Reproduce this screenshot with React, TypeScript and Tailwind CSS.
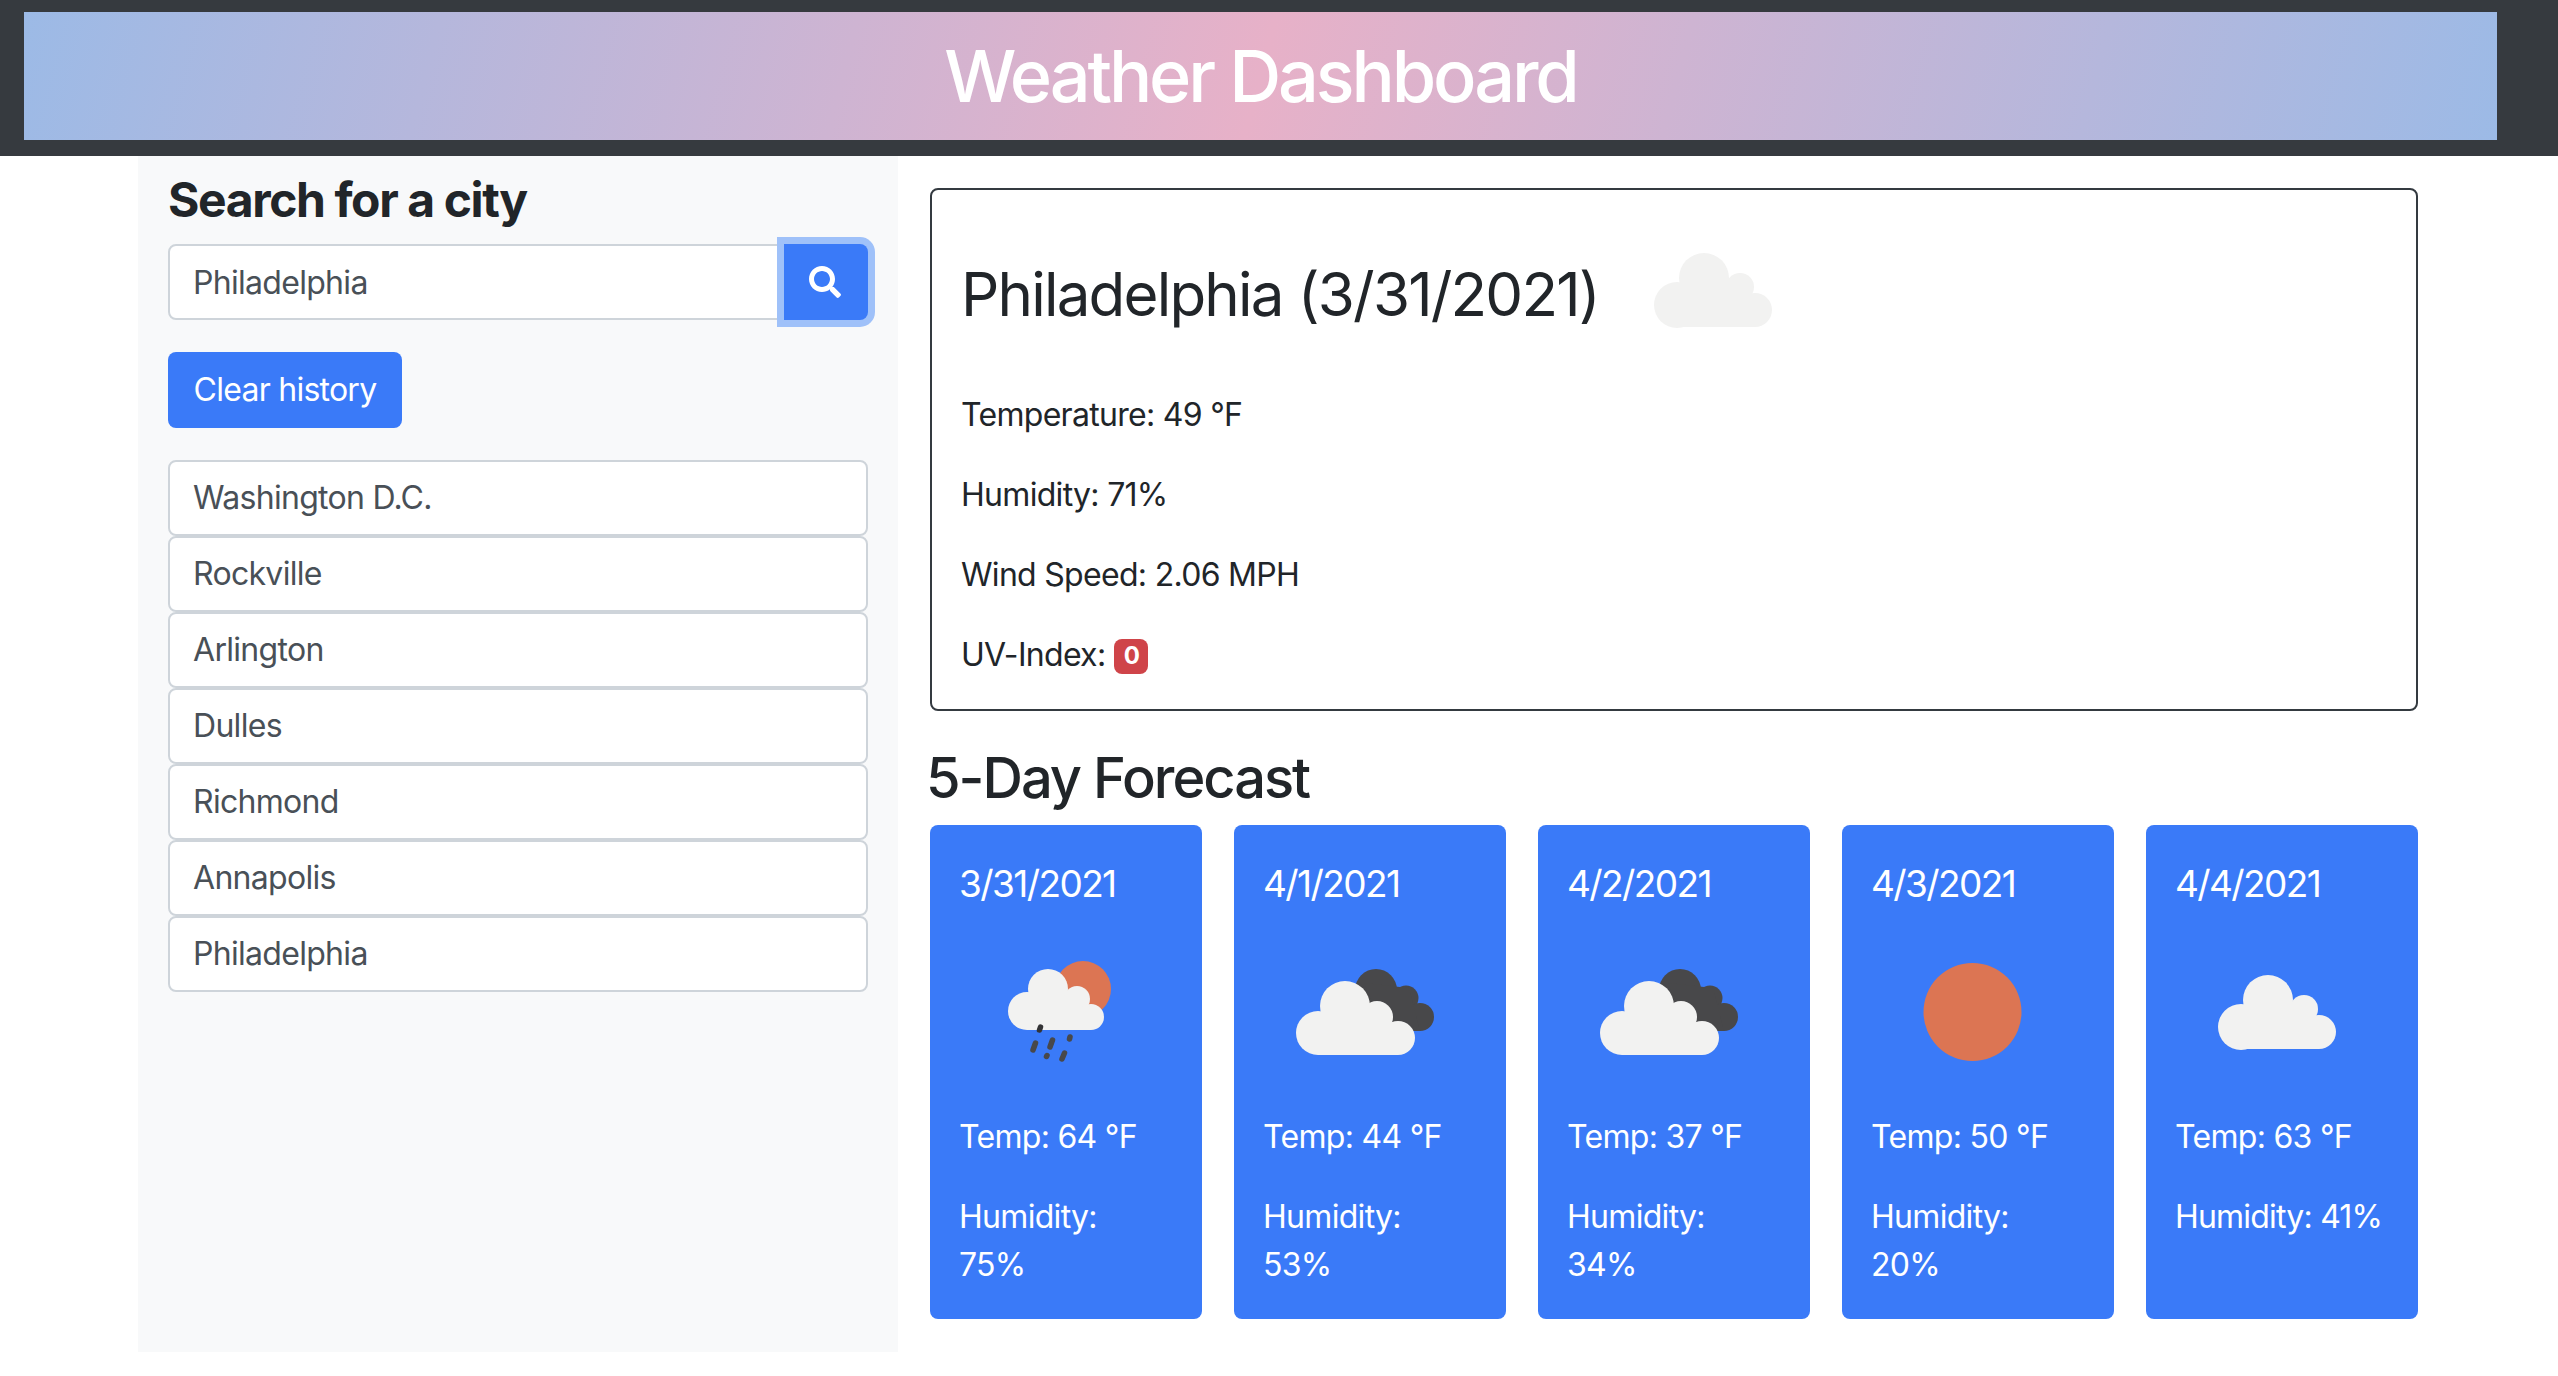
import { FaSearch } from "react-icons/fa"

const cities = ["Washington D.C.", "Rockville", "Arlington", "Dulles", "Richmond", "Annapolis", "Philadelphia"]

const forecast = [
    { date: "3/31/2021", temp: "Temp: 64 °F", humidity: "Humidity: 75%", icon: "rain" },
    { date: "4/1/2021", temp: "Temp: 44 °F", humidity: "Humidity: 53%", icon: "broken" },
    { date: "4/2/2021", temp: "Temp: 37 °F", humidity: "Humidity: 34%", icon: "broken" },
    { date: "4/3/2021", temp: "Temp: 50 °F", humidity: "Humidity: 20%", icon: "sun" },
    { date: "4/4/2021", temp: "Temp: 63 °F", humidity: "Humidity: 41%", icon: "cloud", oneLine: true },
]

function PlainCloud() {
    return (
        <g fill="#f2f2f1">
            <circle cx="65" cy="114" r="23" />
            <circle cx="92" cy="87" r="25" />
            <circle cx="128" cy="96" r="14" />
            <circle cx="143" cy="119" r="17" />
            <rect x="65" y="96" width="63" height="40" />
            <rect x="128" y="108" width="15" height="28" />
        </g>
    )
}

function WeatherIcon({ kind }: { kind: string }) {
    return (
        <svg className="w-[200px] h-[200px] shrink-0 ml-px" viewBox="0 0 200 200">
            {kind === "sun" && <circle cx="100.5" cy="99" r="49" fill="#dc7553" />}
            {kind === "cloud" && <PlainCloud />}
            {kind === "broken" && (
                <g>
                    <g fill="#48484a">
                        <circle cx="112" cy="77" r="21" />
                        <circle cx="142" cy="85" r="12.5" />
                        <circle cx="156" cy="104" r="14" />
                        <path d="M100 70 L145 75 L156 118 L120 118 Z" />
                    </g>
                    <g fill="#f2f2f1">
                        <circle cx="54" cy="120" r="22" />
                        <circle cx="81" cy="93" r="25" />
                        <circle cx="113" cy="104" r="16" />
                        <circle cx="134" cy="125" r="17" />
                        <rect x="54" y="100" width="59" height="42" />
                        <rect x="113" y="112" width="21" height="30" />
                    </g>
                </g>
            )}
            {kind === "rain" && (
                <g>
                    <circle cx="123" cy="76" r="28" fill="#dc7553" />
                    <g fill="#f2f2f1">
                        <circle cx="67" cy="98" r="19" />
                        <circle cx="88" cy="76" r="20" />
                        <circle cx="117" cy="86" r="13" />
                        <circle cx="131" cy="104" r="13" />
                        <rect x="67" y="85" width="50" height="32" />
                        <rect x="117" y="95" width="14" height="22" />
                    </g>
                    <g stroke="#48484a" strokeWidth="5.5" strokeLinecap="round">
                        <path d="M80.5 114 L79.5 117" stroke="#333335" />
                        <path d="M75.5 130 L73 137" />
                        <path d="M92.5 127 L90 134" />
                        <path d="M110 124 L109.5 126" />
                        <path d="M87 142.5 L86.5 143.5" />
                        <path d="M104.5 140 L102 146" />
                    </g>
                </g>
            )}
        </svg>
    )
}

function WeatherIconMain() {
    return (
        <svg className="w-[200px] h-[200px] shrink-0" viewBox="0 0 200 200">
            <PlainCloud />
        </svg>
    )
}

export default function App() {
    return (
        <div className="min-h-[1376px] bg-white text-[32px] leading-[48px] text-[#212529] font-['Inter',sans-serif]">
            {/* Header */}
            <header className="bg-[#363a3f] pt-3 pb-4 pl-6 pr-[61px]">
                <div className="h-32 flex items-center justify-center bg-[linear-gradient(105deg,#9cbae6,#e7b1c8_50%,#9cbae6)]">
                    <h1 className="text-[72px] leading-none font-medium text-white tracking-[-3.1px]">Weather Dashboard</h1>
                </div>
            </header>

            <div className="flex pl-[138px]">
                {/* Sidebar */}
                <aside className="w-[760px] shrink-0 bg-[#f8f9fa] pt-2.5 px-[30px] h-[1196px]">
                    <h3 className="text-[48px] leading-[68px] font-bold tracking-[-1.4px] mb-[10px]">Search for a city</h3>
                    <div className="flex">
                        <input
                            readOnly
                            value="Philadelphia"
                            className="w-[616px] h-[76px] bg-white border-2 border-[#ced4da] rounded-l-lg px-[23px] text-[32px] text-[#495057] tracking-[-0.7px] outline-none"
                        />
                        <button className="w-[84px] h-[76px] flex items-center justify-center bg-[#3a7af8] text-white rounded-r-lg shadow-[0_0_0_7px_#9fc1f9]">
                            <FaSearch size={32} className="-ml-0.5" />
                        </button>
                    </div>
                    <button className="mt-8 h-[76px] w-[234px] bg-[#3a7af8] text-white rounded-lg text-[32px] tracking-[-0.75px]">Clear history</button>
                    <ul className="mt-8">
                        {cities.map((city) => (
                            <li key={city} className="h-[76px] flex items-center bg-white border-2 border-[#ced4da] rounded-lg px-[23px] text-[#495057] tracking-[-0.7px]">
                                {city}
                            </li>
                        ))}
                    </ul>
                </aside>

                {/* Main */}
                <main className="w-[1520px] pl-8 pt-8">
                    <section className="h-[523px] border-2 border-[#343a40] rounded-lg pl-[29px]">
                        <div className="flex items-center h-[200px] mt-px">
                            <h2 className="w-[651px] shrink-0 mt-1.5 whitespace-nowrap text-[60px] leading-[72px] font-normal tracking-[-1.8px]">Philadelphia (3/31/2021)</h2>
                            <WeatherIconMain />
                        </div>
                        <p className="mb-8 tracking-[-0.7px]">Temperature: 49 °F</p>
                        <p className="mb-8 tracking-[-0.7px]">Humidity: 71%</p>
                        <p className="mb-8 tracking-[-0.7px]">Wind Speed: 2.06 MPH</p>
                        <p className="flex items-center gap-[9px] tracking-[-0.7px]">
                            UV-Index:
                            <span className="w-[34px] h-[35px] mt-0.5 flex items-center justify-center rounded-lg bg-[#cf4449] text-white text-2xl font-bold">0</span>
                        </p>
                    </section>

                    <h2 className="text-[56px] leading-[68px] font-medium mt-[33px] mb-[13px] -ml-1 tracking-[-2px]">5-Day Forecast</h2>

                    <div className="flex gap-8">
                        {forecast.map((day) => (
                            <div key={day.date} className="w-[272px] bg-[#3a7af8] text-white rounded-lg pt-[35px] pb-[30px] pl-[29px] pr-[32px] tracking-[-0.7px]">
                                <h5 className="text-[37px] leading-[48px] font-normal mb-[5px] tracking-[-1.6px]">{day.date}</h5>
                                <WeatherIcon kind={day.icon} />
                                <p className="mb-8">{day.temp}</p>
                                {day.oneLine ? <p className="whitespace-nowrap tracking-[-0.8px]">{day.humidity}</p> : <p>{day.humidity}</p>}
                            </div>
                        ))}
                    </div>
                </main>
            </div>
        </div>
    )
}
